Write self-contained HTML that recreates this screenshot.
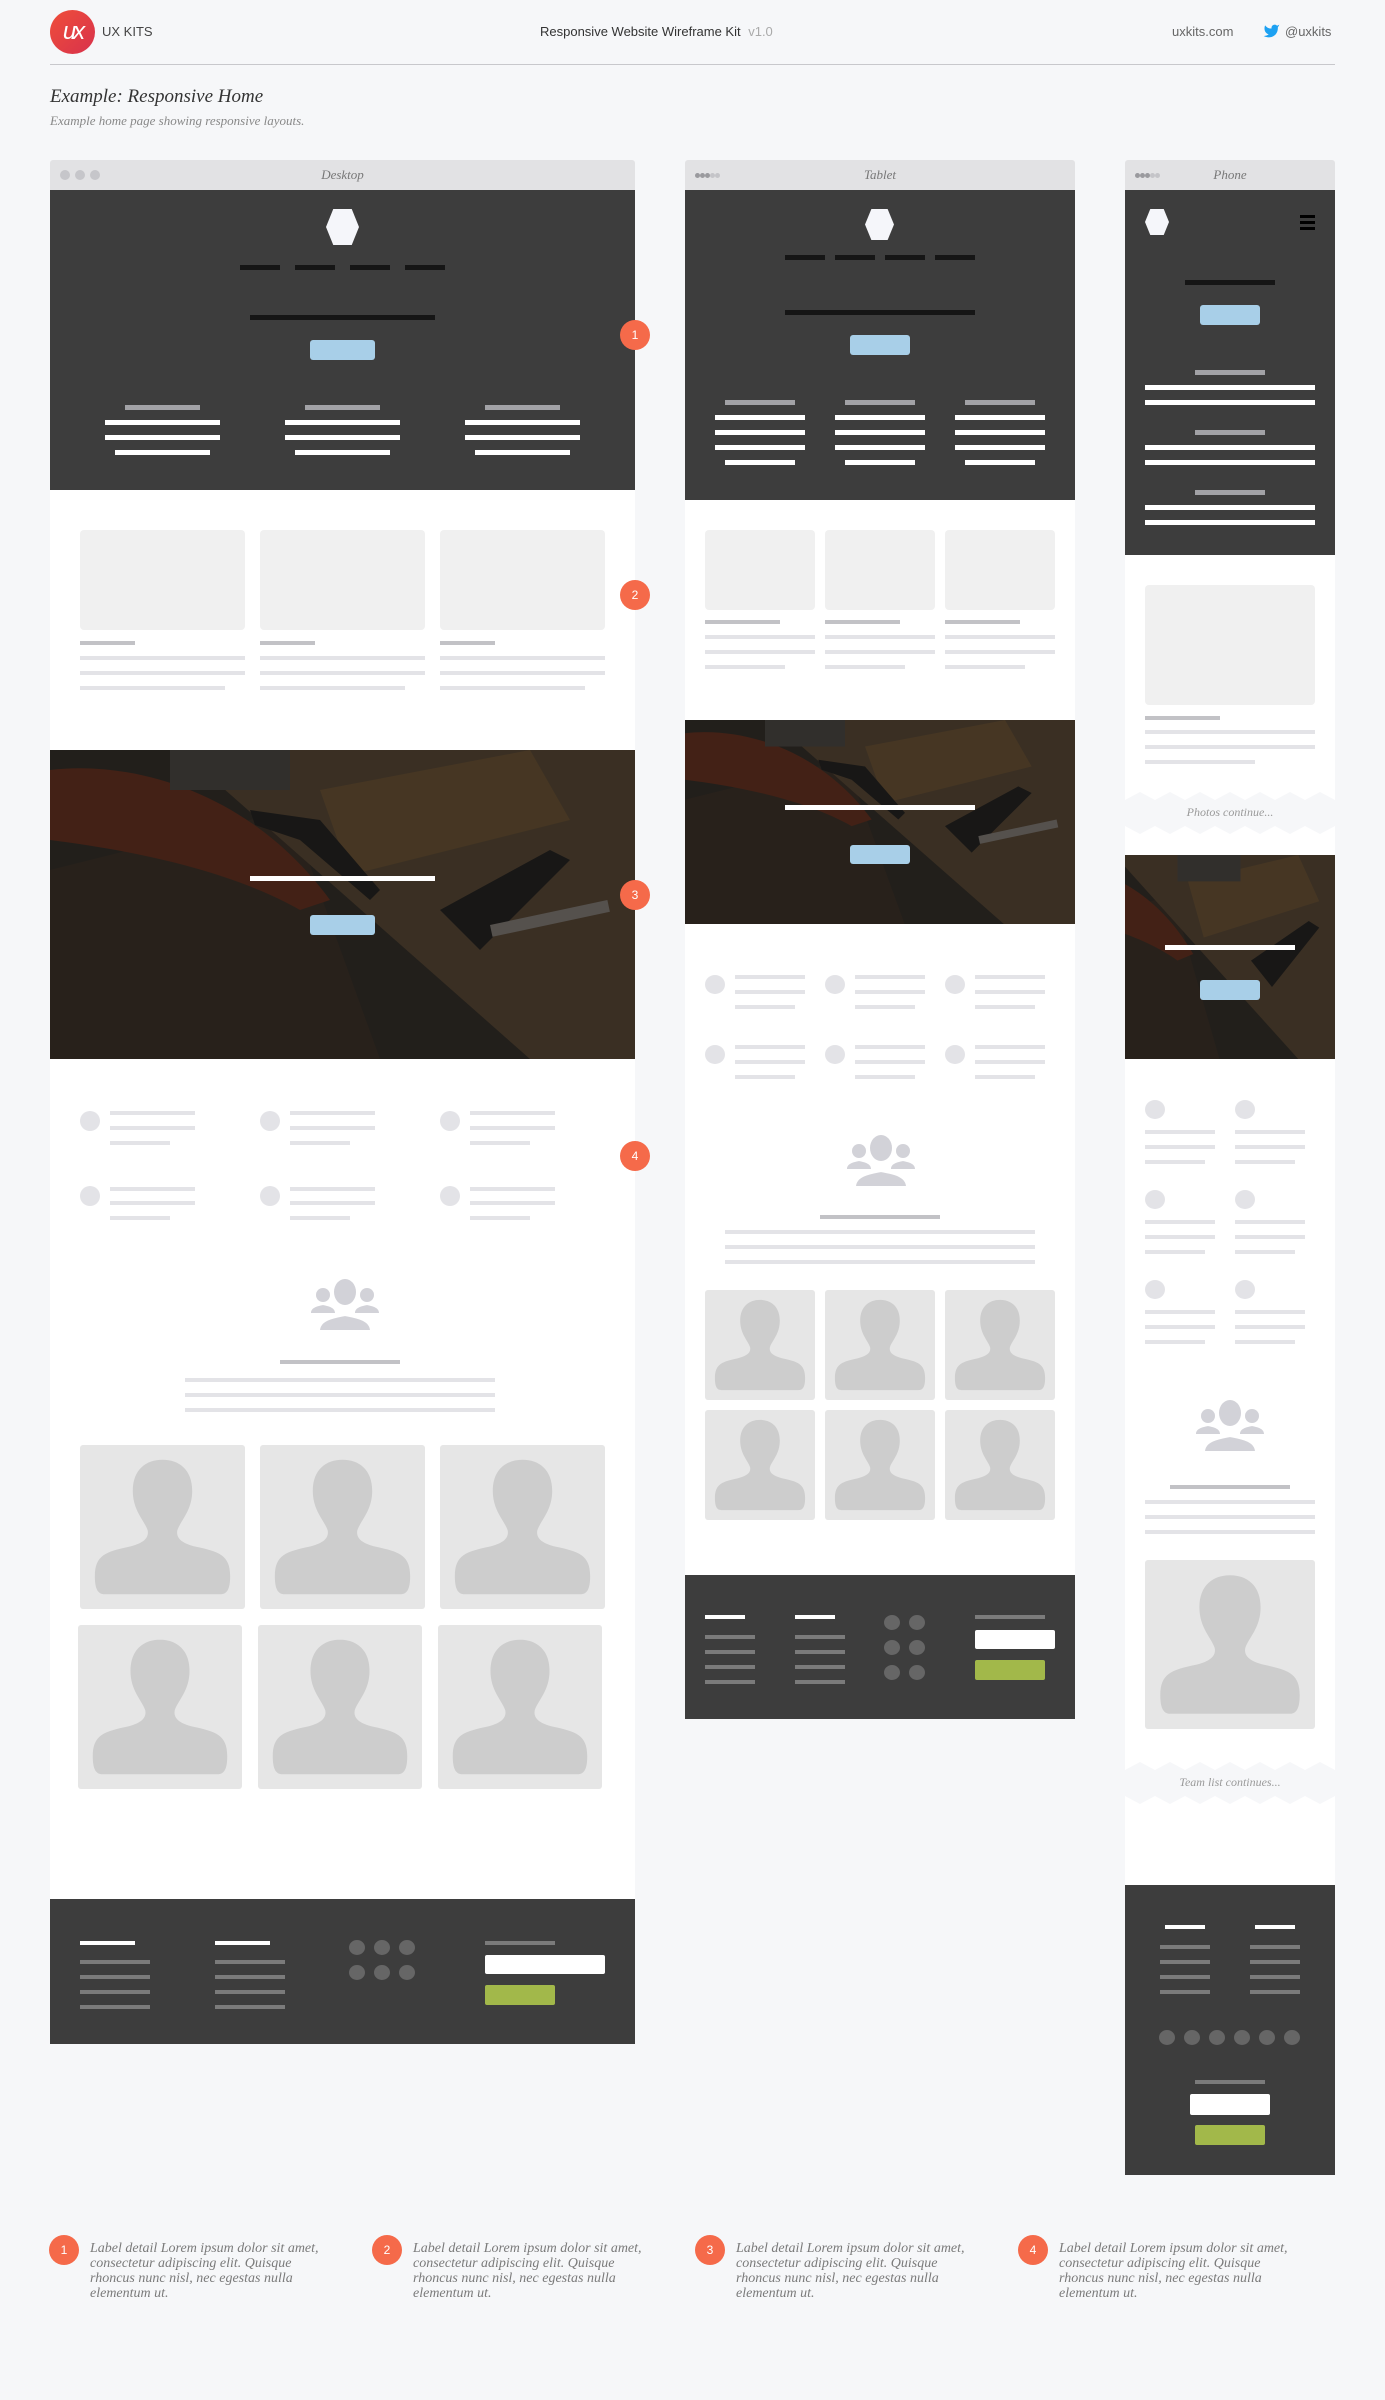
<!DOCTYPE html>
<html><head><meta charset="utf-8">
<style>
*{margin:0;padding:0;box-sizing:border-box}
body{width:1385px;height:2400px;background:#f6f7f9;position:relative;overflow:hidden;font-family:"Liberation Sans",sans-serif}
.a{position:absolute}
.dk{background:#3d3d3d}
.wh{background:#fff}
.nb{background:#151515;height:5px}
.btn{background:#a8cfe8;border-radius:3px}
.wl{background:#fff;height:5px}
.gb{background:#a2a2a6;height:5px}
.card{background:#f0f0f0;border-radius:4px}
.sb{background:#c2c2c6;height:4px}
.ln{background:#e3e3e7;height:4px}
.ci{background:#e3e3e7;border-radius:50%}
.pc{background:#e6e6e6;border-radius:3px}
.pc svg{width:100%;height:100%;display:block}
.fl{background:#7b7b7b;height:4px}
.fw{background:#fff;height:4px}
.dot{background:#666;border-radius:50%;width:16px;height:15px}
.inp{background:#fff;border-radius:2px}
.grn{background:#a2b84a;border-radius:2px}
.hex{background:#f5f6fa;clip-path:polygon(22% 0,78% 0,100% 50%,78% 100%,22% 100%,0 50%)}
.tb{background:#e2e2e4;border-radius:3px 3px 0 0;height:30px;top:160px}
.tl{font-family:"Liberation Serif",serif;font-style:italic;font-size:13px;color:#777;text-align:center;top:167px}
.badge{background:#f56a4a;color:#fff;border-radius:50%;width:30px;height:30px;font-size:12px;line-height:30px;text-align:center}
.note{font-family:"Liberation Serif",serif;font-style:italic;font-size:14px;line-height:15px;color:#7a7a7a;width:242px}
.zz{font-family:"Liberation Serif",serif;font-style:italic;font-size:12px;color:#9a9a9a;text-align:center;width:210px;left:1125px}
.sd{width:5px;height:5px;border-radius:50%;top:173px}
</style></head><body>

<!-- header -->
<div class="a" style="left:50px;top:10px;width:45px;height:44px;border-radius:50%;background:linear-gradient(135deg,#ef4e3a,#d8324c);color:#fff;font-size:24px;font-style:italic;text-align:center;line-height:44px;letter-spacing:-3px">ux</div>
<div class="a" style="left:102px;top:24px;font-size:13px;color:#444">UX KITS</div>
<div class="a" style="left:540px;top:24px;font-size:13px;color:#333">Responsive Website Wireframe Kit <span style="color:#aaa;margin-left:4px">v1.0</span></div>
<div class="a" style="left:1172px;top:24px;font-size:13px;color:#666">uxkits.com</div>
<svg class="a" style="left:1263px;top:23px" width="17" height="16" viewBox="0 0 24 22"><path fill="#1da1f2" d="M23 2a10.9 10.9 0 0 1-3.140 1.53 4.48 4.48 0 0 0-7.86 3v1A10.66 10.66 0 0 1 3 3s-4 9 5 13a11.64 11.64 0 0 1-7 2c9 5 20 0 20-11.5a4.5 4.5 0 0 0-.08-.83A7.72 7.72 0 0 0 23 2z"/></svg>
<div class="a" style="left:1285px;top:24px;font-size:13px;color:#666">@uxkits</div>
<div class="a" style="left:50px;top:64px;width:1285px;height:1px;background:#c8c8cc"></div>
<div class="a" style="left:50px;top:86px;font-family:'Liberation Serif',serif;font-style:italic;font-size:19px;color:#333">Example: Responsive Home</div>
<div class="a" style="left:50px;top:113px;font-family:'Liberation Serif',serif;font-style:italic;font-size:13px;color:#888">Example home page showing responsive layouts.</div>

<svg width="0" height="0" style="position:absolute">
<defs>
<symbol id="photo" viewBox="0 0 585 309" preserveAspectRatio="none">
<rect width="585" height="309" fill="#2f2a25"/>
<polygon points="0,120 240,60 330,309 0,309" fill="#3a2f26"/>
<polygon points="130,0 585,0 585,309 480,309" fill="#5a4834"/>
<path d="M0 20 C80 10 200 40 280 150 L250 160 C180 120 80 100 0 90Z" fill="#6a2e1c"/>
<polygon points="270,40 480,0 520,70 300,125" fill="#6f5533"/>
<polygon points="200,60 270,70 330,140 320,150 250,90 205,75" fill="#1c1c1c"/>
<polygon points="390,160 500,100 520,110 430,200" fill="#1c1c1c"/>
<rect x="440" y="175" width="120" height="12" fill="#8a8580" transform="rotate(-12 440 175)"/>
<rect x="120" y="0" width="120" height="40" fill="#4a4744"/>
<rect width="585" height="309" fill="rgba(20,18,16,0.45)"/>
</symbol>
</defs>
</svg>

<!-- ================= DESKTOP ================= -->
<div class="a tb" style="left:50px;width:585px"></div>
<div class="a" style="left:60px;top:170px;width:10px;height:10px;border-radius:50%;background:#c6c6ca"></div>
<div class="a" style="left:75px;top:170px;width:10px;height:10px;border-radius:50%;background:#c6c6ca"></div>
<div class="a" style="left:90px;top:170px;width:10px;height:10px;border-radius:50%;background:#c6c6ca"></div>
<div class="a tl" style="left:50px;width:585px">Desktop</div>
<div class="a dk" style="left:50px;top:190px;width:585px;height:300px"></div>
<div class="a hex" style="left:326px;top:209px;width:33px;height:36px"></div>
<div class="a nb" style="left:240px;top:265px;width:40px"></div>
<div class="a nb" style="left:295px;top:265px;width:40px"></div>
<div class="a nb" style="left:350px;top:265px;width:40px"></div>
<div class="a nb" style="left:405px;top:265px;width:40px"></div>
<div class="a nb" style="left:250px;top:315px;width:185px"></div>
<div class="a btn" style="left:310px;top:340px;width:65px;height:20px"></div>
<div class="a gb" style="left:125px;top:405px;width:75px"></div>
<div class="a wl" style="left:105px;top:420px;width:115px"></div>
<div class="a wl" style="left:105px;top:435px;width:115px"></div>
<div class="a wl" style="left:115px;top:450px;width:95px"></div>
<div class="a gb" style="left:305px;top:405px;width:75px"></div>
<div class="a wl" style="left:285px;top:420px;width:115px"></div>
<div class="a wl" style="left:285px;top:435px;width:115px"></div>
<div class="a wl" style="left:295px;top:450px;width:95px"></div>
<div class="a gb" style="left:485px;top:405px;width:75px"></div>
<div class="a wl" style="left:465px;top:420px;width:115px"></div>
<div class="a wl" style="left:465px;top:435px;width:115px"></div>
<div class="a wl" style="left:475px;top:450px;width:95px"></div>
<div class="a wh" style="left:50px;top:490px;width:585px;height:260px"></div>
<div class="a card" style="left:80px;top:530px;width:165px;height:100px"></div>
<div class="a card" style="left:260px;top:530px;width:165px;height:100px"></div>
<div class="a card" style="left:440px;top:530px;width:165px;height:100px"></div>
<div class="a sb" style="left:80px;top:641px;width:55px"></div>
<div class="a ln" style="left:80px;top:656px;width:165px"></div>
<div class="a ln" style="left:80px;top:671px;width:165px"></div>
<div class="a ln" style="left:80px;top:686px;width:145px"></div>
<div class="a sb" style="left:260px;top:641px;width:55px"></div>
<div class="a ln" style="left:260px;top:656px;width:165px"></div>
<div class="a ln" style="left:260px;top:671px;width:165px"></div>
<div class="a ln" style="left:260px;top:686px;width:145px"></div>
<div class="a sb" style="left:440px;top:641px;width:55px"></div>
<div class="a ln" style="left:440px;top:656px;width:165px"></div>
<div class="a ln" style="left:440px;top:671px;width:165px"></div>
<div class="a ln" style="left:440px;top:686px;width:145px"></div>
<svg class="a" style="left:50px;top:750px" width="585" height="309"><use href="#photo"/></svg>
<div class="a wl" style="left:250px;top:876px;width:185px"></div>
<div class="a btn" style="left:310px;top:915px;width:65px;height:20px"></div>
<div class="a wh" style="left:50px;top:1059px;width:585px;height:840px"></div>
<div class="a ci" style="left:80px;top:1111px;width:20px;height:20px"></div>
<div class="a ln" style="left:110px;top:1111px;width:85px"></div><div class="a ln" style="left:110px;top:1126px;width:85px"></div><div class="a ln" style="left:110px;top:1141px;width:60px"></div>
<div class="a ci" style="left:260px;top:1111px;width:20px;height:20px"></div>
<div class="a ln" style="left:290px;top:1111px;width:85px"></div><div class="a ln" style="left:290px;top:1126px;width:85px"></div><div class="a ln" style="left:290px;top:1141px;width:60px"></div>
<div class="a ci" style="left:440px;top:1111px;width:20px;height:20px"></div>
<div class="a ln" style="left:470px;top:1111px;width:85px"></div><div class="a ln" style="left:470px;top:1126px;width:85px"></div><div class="a ln" style="left:470px;top:1141px;width:60px"></div>
<div class="a ci" style="left:80px;top:1186px;width:20px;height:20px"></div>
<div class="a ln" style="left:110px;top:1187px;width:85px"></div><div class="a ln" style="left:110px;top:1201px;width:85px"></div><div class="a ln" style="left:110px;top:1216px;width:60px"></div>
<div class="a ci" style="left:260px;top:1186px;width:20px;height:20px"></div>
<div class="a ln" style="left:290px;top:1187px;width:85px"></div><div class="a ln" style="left:290px;top:1201px;width:85px"></div><div class="a ln" style="left:290px;top:1216px;width:60px"></div>
<div class="a ci" style="left:440px;top:1186px;width:20px;height:20px"></div>
<div class="a ln" style="left:470px;top:1187px;width:85px"></div><div class="a ln" style="left:470px;top:1201px;width:85px"></div><div class="a ln" style="left:470px;top:1216px;width:60px"></div>
<svg class="a" style="left:309px;top:1279px" width="72" height="52" viewBox="0 0 72 52"><g fill="#d2d2d8"><circle cx="14" cy="16" r="7"/><path d="M2 34 C2 28 10 27 14 26 C18 27 26 28 26 34Z"/><circle cx="58" cy="16" r="7"/><path d="M46 34 C46 28 54 27 58 26 C62 27 70 28 70 34Z"/><ellipse cx="36" cy="13" rx="11" ry="13"/><path d="M10 52 C10 40 26 38 36 36 C46 38 62 40 62 52Z" stroke="#fff" stroke-width="2"/></g></svg>
<div class="a sb" style="left:280px;top:1360px;width:120px"></div>
<div class="a ln" style="left:185px;top:1378px;width:310px"></div>
<div class="a ln" style="left:185px;top:1393px;width:310px"></div>
<div class="a ln" style="left:185px;top:1408px;width:310px"></div>
<svg width="0" height="0" style="position:absolute"><defs><symbol id="per" viewBox="0 0 100 100" preserveAspectRatio="none"><path fill="#cdcdcd" d="M50 9 C60 9 68 15 68 28 C68 40 61 46 59 52 C58 57 62 60 70 62 C84 65 91 67 91 80 C91 88 89 91 85 91 L15 91 C11 91 9 88 9 80 C9 67 16 65 30 62 C38 60 42 57 41 52 C39 46 32 40 32 28 C32 15 40 9 50 9 Z"/></symbol></defs></svg>
<div class="a pc" style="left:80px;top:1445px;width:165px;height:164px"><svg><use href="#per"/></svg></div>
<div class="a pc" style="left:260px;top:1445px;width:165px;height:164px"><svg><use href="#per"/></svg></div>
<div class="a pc" style="left:440px;top:1445px;width:165px;height:164px"><svg><use href="#per"/></svg></div>
<div class="a pc" style="left:78px;top:1625px;width:164px;height:164px"><svg><use href="#per"/></svg></div>
<div class="a pc" style="left:258px;top:1625px;width:164px;height:164px"><svg><use href="#per"/></svg></div>
<div class="a pc" style="left:438px;top:1625px;width:164px;height:164px"><svg><use href="#per"/></svg></div>
<div class="a dk" style="left:50px;top:1899px;width:585px;height:145px"></div>
<div class="a fw" style="left:80px;top:1941px;width:55px"></div>
<div class="a fl" style="left:80px;top:1960px;width:70px"></div><div class="a fl" style="left:80px;top:1975px;width:70px"></div><div class="a fl" style="left:80px;top:1990px;width:70px"></div><div class="a fl" style="left:80px;top:2005px;width:70px"></div>
<div class="a fw" style="left:215px;top:1941px;width:55px"></div>
<div class="a fl" style="left:215px;top:1960px;width:70px"></div><div class="a fl" style="left:215px;top:1975px;width:70px"></div><div class="a fl" style="left:215px;top:1990px;width:70px"></div><div class="a fl" style="left:215px;top:2005px;width:70px"></div>
<div class="a dot" style="left:349px;top:1940px"></div><div class="a dot" style="left:374px;top:1940px"></div><div class="a dot" style="left:399px;top:1940px"></div>
<div class="a dot" style="left:349px;top:1965px"></div><div class="a dot" style="left:374px;top:1965px"></div><div class="a dot" style="left:399px;top:1965px"></div>
<div class="a fl" style="left:485px;top:1941px;width:70px"></div>
<div class="a inp" style="left:485px;top:1955px;width:120px;height:19px"></div>
<div class="a grn" style="left:485px;top:1985px;width:70px;height:20px"></div>
<div class="a badge" style="left:620px;top:320px">1</div>
<div class="a badge" style="left:620px;top:580px">2</div>
<div class="a badge" style="left:620px;top:880px">3</div>
<div class="a badge" style="left:620px;top:1141px">4</div>

<!-- ================= TABLET ================= -->
<div class="a tb" style="left:685px;width:390px"></div>
<div class="a sd" style="left:695px;background:#9a9a9e"></div><div class="a sd" style="left:700px;background:#9a9a9e"></div><div class="a sd" style="left:705px;background:#9a9a9e"></div><div class="a sd" style="left:710px;background:#c4c4c8"></div><div class="a sd" style="left:715px;background:#c4c4c8"></div>
<div class="a tl" style="left:685px;width:390px">Tablet</div>
<div class="a dk" style="left:685px;top:190px;width:390px;height:310px"></div>
<div class="a hex" style="left:865px;top:209px;width:29px;height:31px"></div>
<div class="a nb" style="left:785px;top:255px;width:40px"></div>
<div class="a nb" style="left:835px;top:255px;width:40px"></div>
<div class="a nb" style="left:885px;top:255px;width:40px"></div>
<div class="a nb" style="left:935px;top:255px;width:40px"></div>
<div class="a nb" style="left:785px;top:310px;width:190px"></div>
<div class="a btn" style="left:850px;top:335px;width:60px;height:20px"></div>
<div class="a gb" style="left:725px;top:400px;width:70px"></div>
<div class="a wl" style="left:715px;top:415px;width:90px"></div><div class="a wl" style="left:715px;top:430px;width:90px"></div><div class="a wl" style="left:715px;top:445px;width:90px"></div><div class="a wl" style="left:725px;top:460px;width:70px"></div>
<div class="a gb" style="left:845px;top:400px;width:70px"></div>
<div class="a wl" style="left:835px;top:415px;width:90px"></div><div class="a wl" style="left:835px;top:430px;width:90px"></div><div class="a wl" style="left:835px;top:445px;width:90px"></div><div class="a wl" style="left:845px;top:460px;width:70px"></div>
<div class="a gb" style="left:965px;top:400px;width:70px"></div>
<div class="a wl" style="left:955px;top:415px;width:90px"></div><div class="a wl" style="left:955px;top:430px;width:90px"></div><div class="a wl" style="left:955px;top:445px;width:90px"></div><div class="a wl" style="left:965px;top:460px;width:70px"></div>
<div class="a wh" style="left:685px;top:500px;width:390px;height:220px"></div>
<div class="a card" style="left:705px;top:530px;width:110px;height:80px"></div>
<div class="a card" style="left:825px;top:530px;width:110px;height:80px"></div>
<div class="a card" style="left:945px;top:530px;width:110px;height:80px"></div>
<div class="a sb" style="left:705px;top:620px;width:75px"></div><div class="a ln" style="left:705px;top:635px;width:110px"></div><div class="a ln" style="left:705px;top:650px;width:110px"></div><div class="a ln" style="left:705px;top:665px;width:80px"></div>
<div class="a sb" style="left:825px;top:620px;width:75px"></div><div class="a ln" style="left:825px;top:635px;width:110px"></div><div class="a ln" style="left:825px;top:650px;width:110px"></div><div class="a ln" style="left:825px;top:665px;width:80px"></div>
<div class="a sb" style="left:945px;top:620px;width:75px"></div><div class="a ln" style="left:945px;top:635px;width:110px"></div><div class="a ln" style="left:945px;top:650px;width:110px"></div><div class="a ln" style="left:945px;top:665px;width:80px"></div>
<svg class="a" style="left:685px;top:720px" width="390" height="205"><use href="#photo"/></svg>
<div class="a wl" style="left:785px;top:805px;width:190px"></div>
<div class="a btn" style="left:850px;top:845px;width:60px;height:19px"></div>
<div class="a wh" style="left:685px;top:924px;width:390px;height:651px"></div>
<div class="a ci" style="left:705px;top:975px;width:20px;height:19px"></div>
<div class="a ln" style="left:735px;top:975px;width:70px"></div><div class="a ln" style="left:735px;top:990px;width:70px"></div><div class="a ln" style="left:735px;top:1005px;width:60px"></div>
<div class="a ci" style="left:825px;top:975px;width:20px;height:19px"></div>
<div class="a ln" style="left:855px;top:975px;width:70px"></div><div class="a ln" style="left:855px;top:990px;width:70px"></div><div class="a ln" style="left:855px;top:1005px;width:60px"></div>
<div class="a ci" style="left:945px;top:975px;width:20px;height:19px"></div>
<div class="a ln" style="left:975px;top:975px;width:70px"></div><div class="a ln" style="left:975px;top:990px;width:70px"></div><div class="a ln" style="left:975px;top:1005px;width:60px"></div>
<div class="a ci" style="left:705px;top:1045px;width:20px;height:19px"></div>
<div class="a ln" style="left:735px;top:1045px;width:70px"></div><div class="a ln" style="left:735px;top:1060px;width:70px"></div><div class="a ln" style="left:735px;top:1075px;width:60px"></div>
<div class="a ci" style="left:825px;top:1045px;width:20px;height:19px"></div>
<div class="a ln" style="left:855px;top:1045px;width:70px"></div><div class="a ln" style="left:855px;top:1060px;width:70px"></div><div class="a ln" style="left:855px;top:1075px;width:60px"></div>
<div class="a ci" style="left:945px;top:1045px;width:20px;height:19px"></div>
<div class="a ln" style="left:975px;top:1045px;width:70px"></div><div class="a ln" style="left:975px;top:1060px;width:70px"></div><div class="a ln" style="left:975px;top:1075px;width:60px"></div>
<svg class="a" style="left:845px;top:1135px" width="72" height="52" viewBox="0 0 72 52"><g fill="#d2d2d8"><circle cx="14" cy="16" r="7"/><path d="M2 34 C2 28 10 27 14 26 C18 27 26 28 26 34Z"/><circle cx="58" cy="16" r="7"/><path d="M46 34 C46 28 54 27 58 26 C62 27 70 28 70 34Z"/><ellipse cx="36" cy="13" rx="11" ry="13"/><path d="M10 52 C10 40 26 38 36 36 C46 38 62 40 62 52Z" stroke="#fff" stroke-width="2"/></g></svg>
<div class="a sb" style="left:820px;top:1215px;width:120px"></div>
<div class="a ln" style="left:725px;top:1230px;width:310px"></div>
<div class="a ln" style="left:725px;top:1245px;width:310px"></div>
<div class="a ln" style="left:725px;top:1260px;width:310px"></div>
<div class="a pc" style="left:705px;top:1290px;width:110px;height:110px"><svg><use href="#per"/></svg></div>
<div class="a pc" style="left:825px;top:1290px;width:110px;height:110px"><svg><use href="#per"/></svg></div>
<div class="a pc" style="left:945px;top:1290px;width:110px;height:110px"><svg><use href="#per"/></svg></div>
<div class="a pc" style="left:705px;top:1410px;width:110px;height:110px"><svg><use href="#per"/></svg></div>
<div class="a pc" style="left:825px;top:1410px;width:110px;height:110px"><svg><use href="#per"/></svg></div>
<div class="a pc" style="left:945px;top:1410px;width:110px;height:110px"><svg><use href="#per"/></svg></div>
<div class="a dk" style="left:685px;top:1575px;width:390px;height:144px"></div>
<div class="a fw" style="left:705px;top:1615px;width:40px"></div>
<div class="a fl" style="left:705px;top:1635px;width:50px"></div><div class="a fl" style="left:705px;top:1650px;width:50px"></div><div class="a fl" style="left:705px;top:1665px;width:50px"></div><div class="a fl" style="left:705px;top:1680px;width:50px"></div>
<div class="a fw" style="left:795px;top:1615px;width:40px"></div>
<div class="a fl" style="left:795px;top:1635px;width:50px"></div><div class="a fl" style="left:795px;top:1650px;width:50px"></div><div class="a fl" style="left:795px;top:1665px;width:50px"></div><div class="a fl" style="left:795px;top:1680px;width:50px"></div>
<div class="a dot" style="left:884px;top:1615px"></div><div class="a dot" style="left:909px;top:1615px"></div>
<div class="a dot" style="left:884px;top:1640px"></div><div class="a dot" style="left:909px;top:1640px"></div>
<div class="a dot" style="left:884px;top:1665px"></div><div class="a dot" style="left:909px;top:1665px"></div>
<div class="a fl" style="left:975px;top:1615px;width:70px"></div>
<div class="a inp" style="left:975px;top:1630px;width:80px;height:19px"></div>
<div class="a grn" style="left:975px;top:1660px;width:70px;height:20px"></div>

<!-- ================= PHONE ================= -->
<div class="a tb" style="left:1125px;width:210px"></div>
<div class="a sd" style="left:1135px;background:#9a9a9e"></div><div class="a sd" style="left:1140px;background:#9a9a9e"></div><div class="a sd" style="left:1145px;background:#9a9a9e"></div><div class="a sd" style="left:1150px;background:#c4c4c8"></div><div class="a sd" style="left:1155px;background:#c4c4c8"></div>
<div class="a tl" style="left:1125px;width:210px">Phone</div>
<div class="a dk" style="left:1125px;top:190px;width:210px;height:365px"></div>
<div class="a hex" style="left:1145px;top:209px;width:24px;height:26px"></div>
<div class="a" style="left:1300px;top:215px;width:15px;height:3px;background:#000"></div>
<div class="a" style="left:1300px;top:221px;width:15px;height:3px;background:#000"></div>
<div class="a" style="left:1300px;top:227px;width:15px;height:3px;background:#000"></div>
<div class="a nb" style="left:1185px;top:280px;width:90px"></div>
<div class="a btn" style="left:1200px;top:305px;width:60px;height:20px"></div>
<div class="a gb" style="left:1195px;top:370px;width:70px"></div>
<div class="a wl" style="left:1145px;top:385px;width:170px"></div><div class="a wl" style="left:1145px;top:400px;width:170px"></div>
<div class="a gb" style="left:1195px;top:430px;width:70px"></div>
<div class="a wl" style="left:1145px;top:445px;width:170px"></div><div class="a wl" style="left:1145px;top:460px;width:170px"></div>
<div class="a gb" style="left:1195px;top:490px;width:70px"></div>
<div class="a wl" style="left:1145px;top:505px;width:170px"></div><div class="a wl" style="left:1145px;top:520px;width:170px"></div>
<div class="a wh" style="left:1125px;top:555px;width:210px;height:300px"></div>
<div class="a card" style="left:1145px;top:585px;width:170px;height:120px"></div>
<div class="a sb" style="left:1145px;top:716px;width:75px"></div>
<div class="a ln" style="left:1145px;top:730px;width:170px"></div><div class="a ln" style="left:1145px;top:745px;width:170px"></div><div class="a ln" style="left:1145px;top:760px;width:110px"></div>
<svg class="a" style="left:1125px;top:788px" width="210" height="50" viewBox="0 0 210 50" preserveAspectRatio="none"><polygon fill="#f6f7f9" points="0,12 15,4 30,12 45,4 60,12 75,4 90,12 105,4 120,12 135,4 150,12 165,4 180,12 195,4 210,12 210,38 195,46 180,38 165,46 150,38 135,46 120,38 105,46 90,38 75,46 60,38 45,46 30,38 15,46 0,38"/></svg>
<div class="a zz" style="top:805px">Photos continue...</div>
<svg class="a" style="left:1125px;top:855px" width="210" height="204" viewBox="150 0 400 309" preserveAspectRatio="none">
<rect x="0" width="585" height="309" fill="#2f2a25"/>
<polygon points="0,120 240,60 330,309 0,309" fill="#3a2f26"/>
<polygon points="130,0 585,0 585,309 480,309" fill="#5a4834"/>
<path d="M0 20 C80 10 200 40 280 150 L250 160 C180 120 80 100 0 90Z" fill="#6a2e1c"/>
<polygon points="270,40 480,0 520,70 300,125" fill="#6f5533"/>
<polygon points="390,160 500,100 520,110 430,200" fill="#1c1c1c"/>
<rect x="250" y="0" width="120" height="40" fill="#4a4744"/>
<rect width="585" height="309" fill="rgba(20,18,16,0.45)"/>
</svg>
<div class="a wl" style="left:1165px;top:945px;width:130px"></div>
<div class="a btn" style="left:1200px;top:980px;width:60px;height:20px"></div>
<div class="a wh" style="left:1125px;top:1059px;width:210px;height:826px"></div>
<div class="a ci" style="left:1145px;top:1100px;width:20px;height:19px"></div>
<div class="a ln" style="left:1145px;top:1130px;width:70px"></div><div class="a ln" style="left:1145px;top:1145px;width:70px"></div><div class="a ln" style="left:1145px;top:1160px;width:60px"></div>
<div class="a ci" style="left:1235px;top:1100px;width:20px;height:19px"></div>
<div class="a ln" style="left:1235px;top:1130px;width:70px"></div><div class="a ln" style="left:1235px;top:1145px;width:70px"></div><div class="a ln" style="left:1235px;top:1160px;width:60px"></div>
<div class="a ci" style="left:1145px;top:1190px;width:20px;height:19px"></div>
<div class="a ln" style="left:1145px;top:1220px;width:70px"></div><div class="a ln" style="left:1145px;top:1235px;width:70px"></div><div class="a ln" style="left:1145px;top:1250px;width:60px"></div>
<div class="a ci" style="left:1235px;top:1190px;width:20px;height:19px"></div>
<div class="a ln" style="left:1235px;top:1220px;width:70px"></div><div class="a ln" style="left:1235px;top:1235px;width:70px"></div><div class="a ln" style="left:1235px;top:1250px;width:60px"></div>
<div class="a ci" style="left:1145px;top:1280px;width:20px;height:19px"></div>
<div class="a ln" style="left:1145px;top:1310px;width:70px"></div><div class="a ln" style="left:1145px;top:1325px;width:70px"></div><div class="a ln" style="left:1145px;top:1340px;width:60px"></div>
<div class="a ci" style="left:1235px;top:1280px;width:20px;height:19px"></div>
<div class="a ln" style="left:1235px;top:1310px;width:70px"></div><div class="a ln" style="left:1235px;top:1325px;width:70px"></div><div class="a ln" style="left:1235px;top:1340px;width:60px"></div>
<svg class="a" style="left:1194px;top:1400px" width="72" height="52" viewBox="0 0 72 52"><g fill="#d2d2d8"><circle cx="14" cy="16" r="7"/><path d="M2 34 C2 28 10 27 14 26 C18 27 26 28 26 34Z"/><circle cx="58" cy="16" r="7"/><path d="M46 34 C46 28 54 27 58 26 C62 27 70 28 70 34Z"/><ellipse cx="36" cy="13" rx="11" ry="13"/><path d="M10 52 C10 40 26 38 36 36 C46 38 62 40 62 52Z" stroke="#fff" stroke-width="2"/></g></svg>
<div class="a sb" style="left:1170px;top:1485px;width:120px"></div>
<div class="a ln" style="left:1145px;top:1500px;width:170px"></div>
<div class="a ln" style="left:1145px;top:1515px;width:170px"></div>
<div class="a ln" style="left:1145px;top:1530px;width:170px"></div>
<div class="a pc" style="left:1145px;top:1560px;width:170px;height:169px"><svg><use href="#per"/></svg></div>
<svg class="a" style="left:1125px;top:1758px" width="210" height="50" viewBox="0 0 210 50" preserveAspectRatio="none"><polygon fill="#f6f7f9" points="0,12 15,4 30,12 45,4 60,12 75,4 90,12 105,4 120,12 135,4 150,12 165,4 180,12 195,4 210,12 210,38 195,46 180,38 165,46 150,38 135,46 120,38 105,46 90,38 75,46 60,38 45,46 30,38 15,46 0,38"/></svg>
<div class="a zz" style="top:1775px">Team list continues...</div>
<div class="a dk" style="left:1125px;top:1885px;width:210px;height:290px"></div>
<div class="a fw" style="left:1165px;top:1925px;width:40px"></div>
<div class="a fl" style="left:1160px;top:1945px;width:50px"></div><div class="a fl" style="left:1160px;top:1960px;width:50px"></div><div class="a fl" style="left:1160px;top:1975px;width:50px"></div><div class="a fl" style="left:1160px;top:1990px;width:50px"></div>
<div class="a fw" style="left:1255px;top:1925px;width:40px"></div>
<div class="a fl" style="left:1250px;top:1945px;width:50px"></div><div class="a fl" style="left:1250px;top:1960px;width:50px"></div><div class="a fl" style="left:1250px;top:1975px;width:50px"></div><div class="a fl" style="left:1250px;top:1990px;width:50px"></div>
<div class="a dot" style="left:1159px;top:2030px"></div><div class="a dot" style="left:1184px;top:2030px"></div><div class="a dot" style="left:1209px;top:2030px"></div><div class="a dot" style="left:1234px;top:2030px"></div><div class="a dot" style="left:1259px;top:2030px"></div><div class="a dot" style="left:1284px;top:2030px"></div>
<div class="a fl" style="left:1195px;top:2080px;width:70px"></div>
<div class="a inp" style="left:1190px;top:2094px;width:80px;height:21px"></div>
<div class="a grn" style="left:1195px;top:2125px;width:70px;height:20px"></div>

<!-- notes -->
<div class="a badge" style="left:49px;top:2235px">1</div>
<div class="a note" style="left:90px;top:2241px">Label detail Lorem ipsum dolor sit amet, consectetur adipiscing elit. Quisque rhoncus nunc nisl, nec egestas nulla elementum ut.</div>
<div class="a badge" style="left:372px;top:2235px">2</div>
<div class="a note" style="left:413px;top:2241px">Label detail Lorem ipsum dolor sit amet, consectetur adipiscing elit. Quisque rhoncus nunc nisl, nec egestas nulla elementum ut.</div>
<div class="a badge" style="left:695px;top:2235px">3</div>
<div class="a note" style="left:736px;top:2241px">Label detail Lorem ipsum dolor sit amet, consectetur adipiscing elit. Quisque rhoncus nunc nisl, nec egestas nulla elementum ut.</div>
<div class="a badge" style="left:1018px;top:2235px">4</div>
<div class="a note" style="left:1059px;top:2241px">Label detail Lorem ipsum dolor sit amet, consectetur adipiscing elit. Quisque rhoncus nunc nisl, nec egestas nulla elementum ut.</div>
</body></html>
